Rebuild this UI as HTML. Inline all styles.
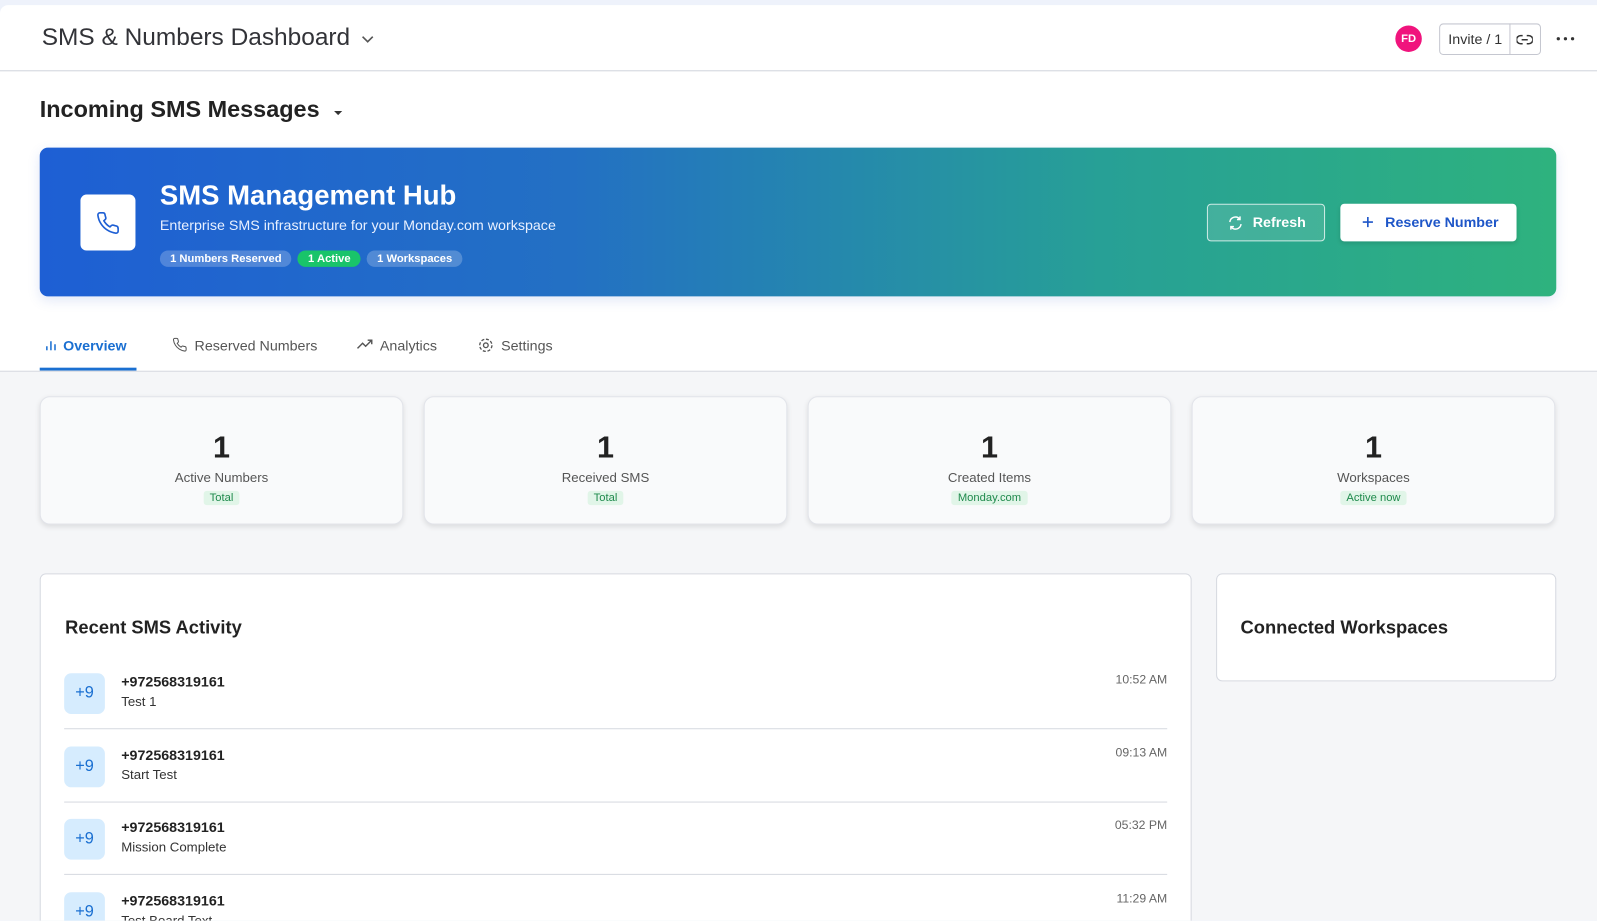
<!DOCTYPE html>
<html><head><meta charset="utf-8"><style>
*{box-sizing:border-box;margin:0;padding:0}
html,body{width:1597px;height:921px;overflow:hidden}
body{background:#eef2fb;font-family:"Liberation Sans",sans-serif;color:#323338;position:relative}
.wrap{position:absolute;left:0;top:0;width:1568px;height:904px;overflow:hidden;transform:scale(1.0185);transform-origin:0 0}
.main{position:absolute;left:0;top:5px;width:1568px;height:899px;background:#fff;border-radius:8px 0 0 0;overflow:hidden}
.hdr{height:65px;border-bottom:1px solid #d0d4dc;position:relative}
.t1{position:absolute;left:41px;top:18px;font-size:24px;color:#323338}
.abs{position:absolute}
.gray{position:absolute;left:0;top:359px;width:1568px;height:560px;background:#f5f6f8;border-top:1px solid #d6d9e0}
.card{position:absolute;top:384px;width:357px;height:126px;background:#f9fafb;border:1px solid #e2e4ea;border-radius:10px;box-shadow:0 2px 5px rgba(0,0,0,.1);text-align:center}
.card .n{font-size:30px;font-weight:bold;line-height:34px;margin-top:33px;color:#222}
.card .l{font-size:13px;color:#555;line-height:16px;margin-top:4px}
.card .b{display:inline-block;background:#e1f5e8;color:#1f8a4c;font-size:11px;padding:1px 6px;border-radius:3px;margin-top:5px}
.pill{display:inline-block;font-size:11px;font-weight:bold;color:#fff;padding:2px 10px;border-radius:9px;margin-right:6px;background:rgba(255,255,255,.22)}
.row{position:absolute;left:63px;width:1083px;height:55px;border-bottom:1px solid #d6d9e0}
.av{position:absolute;left:0;top:0;width:40px;height:40px;background:#d6ecfe;border-radius:7px;color:#1a6fd1;font-size:16px;text-align:center;line-height:40px}
.ph{position:absolute;left:56px;top:0;font-size:14px;font-weight:bold;color:#222}
.ms{position:absolute;left:56px;top:20px;font-size:13px;color:#333}
.tm{position:absolute;right:0;top:-1px;font-size:12px;color:#666}
</style></head><body>
<div class="wrap">
<div class="main">
 <div class="hdr">
  <div class="t1">SMS &amp; Numbers Dashboard <svg width="14" height="10" viewBox="0 0 14 10" style="margin-left:4px"><path d="M2 2l5 5 5-5" stroke="#555" stroke-width="1.6" fill="none"/></svg></div>
  <div class="abs" style="left:1370px;top:20px;width:26px;height:26px;border-radius:50%;background:#f0147d;color:#fff;font-size:11px;font-weight:bold;text-align:center;line-height:26px">FD</div>
  <div class="abs" style="left:1413px;top:18px;width:100px;height:31px;border:1px solid #c5c7d0;border-radius:4px"></div>
  <div class="abs" style="left:1482px;top:18px;width:1px;height:31px;background:#c5c7d0"></div>
  <div class="abs" style="left:1422px;top:25px;font-size:14px;color:#333">Invite / 1</div>
  <svg class="abs" style="left:1489px;top:28px" width="16" height="12" viewBox="0 0 16 12"><path d="M6 2H4a4 4 0 000 8h2M10 2h2a4 4 0 010 8h-2M5 6h6" stroke="#333" stroke-width="1.5" fill="none"/></svg>
  <svg class="abs" style="left:1528px;top:31px" width="20" height="4" viewBox="0 0 20 4"><circle cx="2" cy="2" r="1.6" fill="#333"/><circle cx="9" cy="2" r="1.6" fill="#333"/><circle cx="16" cy="2" r="1.6" fill="#333"/></svg>
 </div>
 <div class="abs" style="left:39px;top:89px;font-size:23px;font-weight:bold;color:#222">Incoming SMS Messages <svg width="12" height="8" viewBox="0 0 12 8" style="margin-left:6px"><path d="M2 2h8l-4 4z" fill="#333"/></svg></div>
 <div class="abs" style="left:39px;top:140px;width:1489px;height:146px;border-radius:8px;background:linear-gradient(90deg,#1e5fd4 0%,#2370c4 35%,#27a096 70%,#2eb27e 100%);box-shadow:0 4px 12px rgba(60,100,200,.15)">
  <div class="abs" style="left:40px;top:46px;width:54px;height:55px;background:#fff;border-radius:6px"></div>
  <svg class="abs" style="left:54px;top:62px" width="26" height="24" viewBox="0 0 24 24"><path d="M22 16.9v3a2 2 0 01-2.2 2 19.8 19.8 0 01-8.6-3.1 19.5 19.5 0 01-6-6A19.8 19.8 0 012.1 4.2 2 2 0 014.1 2h3a2 2 0 012 1.7c.1.9.4 1.8.7 2.7a2 2 0 01-.5 2.1L8 9.8a16 16 0 006 6l1.3-1.3a2 2 0 012.1-.4c.9.3 1.8.6 2.7.7a2 2 0 011.7 2z" stroke="#1e5fd4" stroke-width="1.6" fill="none"/></svg>
  <div class="abs" style="left:118px;top:32px;font-size:27px;font-weight:bold;color:#fff">SMS Management Hub</div>
  <div class="abs" style="left:118px;top:68px;font-size:14px;color:#e8f0ff">Enterprise SMS infrastructure for your Monday.com workspace</div>
  <div class="abs" style="left:118px;top:99px"><span class="pill">1 Numbers Reserved</span><span class="pill" style="background:#19c46a">1 Active</span><span class="pill">1 Workspaces</span></div>
  <div class="abs" style="left:1146px;top:55px;width:116px;height:37px;border:1px solid rgba(255,255,255,.75);border-radius:4px;background:rgba(255,255,255,.12);color:#fff;font-size:14px;font-weight:bold;line-height:35px;padding-left:44px">Refresh</div>
  <svg class="abs" style="left:1166px;top:66px" width="16" height="16" viewBox="0 0 16 16"><path d="M2.5 7a5.5 5.5 0 0110-2.5M13.5 9a5.5 5.5 0 01-10 2.5M12.5 1.5v3h-3M3.5 14.5v-3h3" stroke="#fff" stroke-width="1.4" fill="none"/></svg>
  <div class="abs" style="left:1277px;top:55px;width:173px;height:37px;background:#fff;border-radius:4px;color:#1e56c8;font-size:14px;font-weight:bold;line-height:37px;padding-left:44px;box-shadow:0 2px 4px rgba(0,0,0,.12)">Reserve Number</div>
  <svg class="abs" style="left:1298px;top:67px" width="12" height="12" viewBox="0 0 12 12"><path d="M6 1v10M1 6h10" stroke="#1e56c8" stroke-width="1.6"/></svg>
 </div>
 <div class="abs" style="left:44px;top:326px;font-size:14px;font-weight:bold;color:#1a6fd1"><svg width="12" height="12" viewBox="0 0 12 12" style="margin-right:6px"><path d="M2 12V8M6 12V3M10 12V6" stroke="#1a6fd1" stroke-width="1.5"/></svg>Overview</div>
 <div class="abs" style="left:39px;top:356px;width:95px;height:3px;background:#1a6fd1"></div>
 <div class="abs" style="left:169px;top:326px;font-size:14px;color:#555"><svg width="15" height="15" viewBox="0 0 24 24" style="margin-right:7px;vertical-align:-2px"><path d="M22 16.9v3a2 2 0 01-2.2 2 19.8 19.8 0 01-8.6-3.1 19.5 19.5 0 01-6-6A19.8 19.8 0 012.1 4.2 2 2 0 014.1 2h3a2 2 0 012 1.7c.1.9.4 1.8.7 2.7a2 2 0 01-.5 2.1L8 9.8a16 16 0 006 6l1.3-1.3a2 2 0 012.1-.4c.9.3 1.8.6 2.7.7a2 2 0 011.7 2z" stroke="#555" stroke-width="1.6" fill="none"/></svg>Reserved Numbers</div>
 <div class="abs" style="left:350px;top:326px;font-size:14px;color:#555"><svg width="17" height="12" viewBox="0 0 17 12" style="margin-right:6px"><path d="M1 10l5-5 3 3 6-6M11 2h4v4" stroke="#555" stroke-width="1.4" fill="none"/></svg>Analytics</div>
 <div class="abs" style="left:469px;top:326px;font-size:14px;color:#555"><svg width="16" height="16" viewBox="0 0 16 16" style="margin-right:7px;vertical-align:-3px"><circle cx="8" cy="8" r="2.3" stroke="#555" stroke-width="1.3" fill="none"/><circle cx="8" cy="8" r="6" stroke="#555" stroke-width="1.3" fill="none" stroke-dasharray="3 1.7"/></svg>Settings</div>
 <div class="gray"></div>
 <div class="card" style="left:39px"><div class="n">1</div><div class="l">Active Numbers</div><div class="b">Total</div></div>
 <div class="card" style="left:416px"><div class="n">1</div><div class="l">Received SMS</div><div class="b">Total</div></div>
 <div class="card" style="left:793px"><div class="n">1</div><div class="l">Created Items</div><div class="b">Monday.com</div></div>
 <div class="card" style="left:1170px"><div class="n">1</div><div class="l">Workspaces</div><div class="b">Active now</div></div>
 <div class="abs" style="left:39px;top:558px;width:1131px;height:400px;background:#fff;border:1px solid #d6d9e0;border-radius:6px"></div>
 <div class="abs" style="left:64px;top:601px;font-size:18px;font-weight:bold;color:#222">Recent SMS Activity</div>
 <div class="row" style="top:656px"><div class="av">+9</div><div class="ph">+972568319161</div><div class="ms">Test 1</div><div class="tm">10:52 AM</div></div>
 <div class="row" style="top:728px"><div class="av">+9</div><div class="ph">+972568319161</div><div class="ms">Start Test</div><div class="tm">09:13 AM</div></div>
 <div class="row" style="top:799px"><div class="av">+9</div><div class="ph">+972568319161</div><div class="ms">Mission Complete</div><div class="tm">05:32 PM</div></div>
 <div class="row" style="top:871px;border:none"><div class="av">+9</div><div class="ph">+972568319161</div><div class="ms">Test Board Text</div><div class="tm">11:29 AM</div></div>
 <div class="abs" style="left:1194px;top:558px;width:334px;height:106px;background:#fff;border:1px solid #d6d9e0;border-radius:6px"></div>
 <div class="abs" style="left:1218px;top:601px;font-size:18px;font-weight:bold;color:#222">Connected Workspaces</div>
</div>
</div>
</body></html>
